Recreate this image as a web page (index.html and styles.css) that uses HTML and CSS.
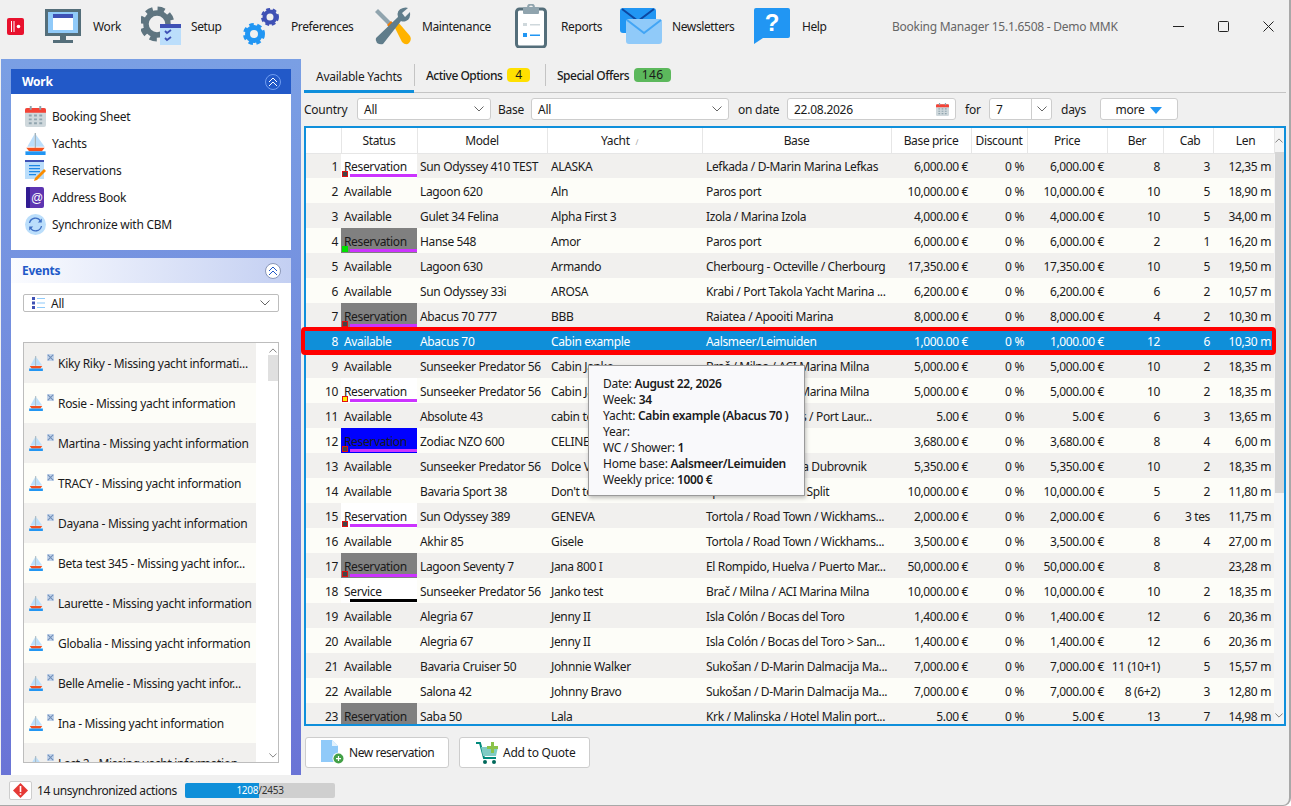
FILE: index.html
```html
<!DOCTYPE html>
<html lang="en">
<head>
  <meta charset="UTF-8">
  <title>Booking Manager</title>
  <link rel="stylesheet" href="styles.css">
</head>
<body>

  <!-- shared icons -->
  <svg class="icon-defs" width="0" height="0">
    <defs>
      <symbol id="boat" viewBox="0 0 22 24">
        <path d="M10 1v14H2z" fill="#bbdefb"/>
        <path d="M11.5 2v13H21z" fill="#bbdefb"/>
        <path d="M10.2 0h1v16h-1z" fill="#78909c"/>
        <path d="M1 16h20l-3 4H4z" fill="#f4511e"/>
        <path d="M0 20h22v4H0z" fill="#2196f3"/>
      </symbol>
      <symbol id="tiny" viewBox="0 0 8 8">
        <path d="M0 0h8v8H0z" fill="#c3d4ea"/>
        <path d="M1 1l6 6M7 1L1 7" stroke="#6f8db8" stroke-width="1.2"/>
      </symbol>
      <symbol id="chev" viewBox="0 0 10 6">
        <path d="M.5.5L5 5 9.500.5" fill="none" stroke="#666" stroke-width="1"/>
      </symbol>
      <symbol id="calendar" viewBox="0 0 22 22">
        <rect y="2" width="22" height="20" rx="2" fill="#cfd8dc"/>
        <path d="M0 4a2 2 0 0 1 2-2h18a2 2 0 0 1 2 2v3H0z" fill="#f44336"/>
        <path d="M5 0h2v4H5zM15 0h2v4h-2z" fill="#90a4ae"/>
        <path d="M4 9h3v2H4zM9.500 9h3v2h-3zM15 9h3v2h-3zM4 13h3v2H4zM9.500 13h3v2h-3zM15 13h3v2h-3zM4 17h3v2H4zM9.500 17h3v2h-3zM15 17h3v2h-3z" fill="#90a4ae"/>
      </symbol>
    </defs>
  </svg>

  <div class="app">

    <!-- Toolbar -->
    <header class="toolbar">
      <svg class="logo" width="17" height="17" viewBox="0 0 17 17">
        <rect width="17" height="17" rx="2" fill="#e8112d"/>
        <path d="M4.500 3v11M7 3v11" stroke="#fff" stroke-width="1"/>
        <circle cx="11.500" cy="8.500" r="1.800" fill="#fff"/>
      </svg>

      <div class="tool tool-work">
        <svg width="38" height="36" viewBox="0 0 38 36">
          <rect x="0" y="1" width="36" height="27" fill="#546e7a"/>
          <rect x="3" y="4" width="30" height="21" fill="#90caf9"/>
          <rect x="8" y="6" width="20" height="16" fill="#fff"/>
          <rect x="8" y="6" width="20" height="4" fill="#3f51b5"/>
          <path d="M15 28h6v4h-6zM8 32h20v3H8z" fill="#546e7a"/>
        </svg>
        <span>Work</span>
      </div>

      <div class="tool tool-setup">
        <svg width="40" height="40" viewBox="0 0 40 40">
          <circle cx="16" cy="18" r="15" fill="none" stroke="#5f7580" stroke-width="5" stroke-dasharray="7 4.800"/>
          <circle cx="16" cy="18" r="11" fill="none" stroke="#5f7580" stroke-width="5.500"/>
          <rect x="19" y="18" width="21" height="21" fill="#bbdefb"/>
          <rect x="19" y="18" width="21" height="4" fill="#3f51b5"/>
          <path d="M24 25l2 2 4-3M24 32l2 2 4-3" fill="none" stroke="#3f51b5" stroke-width="1.800"/>
        </svg>
        <span>Setup</span>
      </div>

      <div class="tool tool-pref">
        <svg width="39" height="38" viewBox="0 0 39 38">
          <circle cx="12" cy="27" r="6.500" fill="none" stroke="#2196f3" stroke-width="5"/>
          <circle cx="12" cy="27" r="9.500" fill="none" stroke="#2196f3" stroke-width="3" stroke-dasharray="4.500 3.450"/>
          <circle cx="28" cy="10" r="5.500" fill="none" stroke="#3f51b5" stroke-width="4"/>
          <circle cx="28" cy="10" r="8" fill="none" stroke="#3f51b5" stroke-width="2" stroke-dasharray="4 2.700"/>
        </svg>
        <span>Preferences</span>
      </div>

      <div class="tool tool-maint">
        <svg width="39" height="38" viewBox="0 0 39 38">
          <path d="M2 5l3-3 18 18-3 3z" fill="#90a4ae"/>
          <path d="M21 19l4-4 12 14q2 4-1 7t-7-1z" fill="#ffb300"/>
          <path d="M18 14l4 4-4 4-4-4z" fill="#f57c00"/>
          <path d="M3 31L25 10q-2-7 5-9 3-1 5 0l-6 5 3 4 5-5q1 7-4 9-3 1-5 0L10 37q-3 1-6-1-2-3-1-5z" fill="#607d8b"/>
        </svg>
        <span>Maintenance</span>
      </div>

      <div class="tool tool-reports">
        <svg width="36" height="44" viewBox="0 0 36 44">
          <rect x="1.500" y="5" width="29" height="38" rx="3" fill="#fff" stroke="#546e7a" stroke-width="3"/>
          <rect x="8" y="3" width="16" height="7" rx="1" fill="#90a4ae"/>
          <circle cx="16" cy="3.500" r="3" fill="none" stroke="#90a4ae" stroke-width="2"/>
          <path d="M8 19h4v3H8zM15 20h10v1.500H15z" fill="#cfd8dc"/>
          <path d="M8 29h4v4H8zM15 30.500h10V32H15z" fill="#2196f3"/>
        </svg>
        <span>Reports</span>
      </div>

      <div class="tool tool-news">
        <svg width="42" height="36" viewBox="0 0 42 36">
          <rect x="0" y="0" width="36" height="25" rx="3" fill="#2196f3"/>
          <path d="M2 1l16 12L34 1" fill="none" stroke="#0d47a1" stroke-width="2"/>
          <rect x="6" y="11" width="36" height="25" rx="3" fill="#90caf9"/>
          <path d="M7 12l17 13 17-13" fill="none" stroke="#42a5f5" stroke-width="2"/>
        </svg>
        <span>Newsletters</span>
      </div>

      <div class="tool tool-help">
        <svg width="38" height="36" viewBox="0 0 38 36">
          <path d="M2 0h32a2 2 0 0 1 2 2v26a2 2 0 0 1-2 2H9l-9 6V2a2 2 0 0 1 2-2z" fill="#2196f3"/>
          <text x="18" y="23" class="help-mark">?</text>
        </svg>
        <span>Help</span>
      </div>

      <div class="app-title">Booking Manager 15.1.6508 - Demo MMK</div>

      <div class="win-controls">
        <svg width="11" height="11" viewBox="0 0 11 11"><path d="M0 5.500h11" stroke="#222"/></svg>
        <svg width="11" height="11" viewBox="0 0 11 11"><rect x=".5" y=".5" width="10" height="10" rx="1" fill="none" stroke="#222"/></svg>
        <svg width="11" height="11" viewBox="0 0 11 11"><path d="M.5.5l10 10M10.500.5l-10 10" stroke="#222"/></svg>
      </div>
    </header>

    <div class="content">

      <!-- Left side panels -->
      <aside class="sidebar">
        <section class="panel panel-work">
          <div class="panel-head head-work">
            <span>Work</span>
            <span class="collapse collapse-dark">
              <svg width="10" height="10" viewBox="0 0 10 10"><path d="M1 5l4-4 4 4M1 9l4-4 4 4" fill="none" stroke="#fff"/></svg>
            </span>
          </div>
          <ul class="nav-list">
            <li><svg width="21" height="21"><use href="#calendar"/></svg>Booking Sheet</li>
            <li><svg width="21" height="22"><use href="#boat"/></svg>Yachts</li>
            <li>
              <svg width="21" height="21" viewBox="0 0 21 21">
                <rect width="19" height="19" fill="#bbdefb"/>
                <rect width="19" height="2" fill="#3f51b5"/>
                <path d="M4 5h11v1.200H4zM4 8h11v1.200H4zM4 11h11v1.200H4zM4 14h7v1.200H4z" fill="#1e88e5"/>
                <path d="M19 9l2 2-9 9-3 1 1-3z" fill="#fb8c00"/>
              </svg>Reservations
            </li>
            <li>
              <svg width="21" height="21" viewBox="0 0 21 21">
                <rect x="1" width="18" height="21" rx="2" fill="#5e35b1"/>
                <rect x="1" width="4" height="21" rx="1" fill="#311b92"/>
                <text x="12" y="15" class="at-mark">@</text>
              </svg>Address Book
            </li>
            <li>
              <svg width="21" height="21" viewBox="0 0 21 21">
                <circle cx="10.500" cy="10.500" r="10.500" fill="#bbdefb"/>
                <path d="M4.500 9a6 6 0 0 1 11-2M16.500 12a6 6 0 0 1-11 2" fill="none" stroke="#3f6fc4" stroke-width="1.300"/>
                <path d="M16.800 4.500v4h-4zM4.200 16.500v-4h4z" fill="#3f6fc4"/>
              </svg>Synchronize with CBM
            </li>
          </ul>
        </section>

        <section class="panel panel-events">
          <div class="panel-head head-events">
            <span>Events</span>
            <span class="collapse collapse-light">
              <svg width="10" height="10" viewBox="0 0 10 10"><path d="M1 5l4-4 4 4M1 9l4-4 4 4" fill="none" stroke="#2259c8"/></svg>
            </span>
          </div>
          <div class="events-body">
            <div class="event-filter">
              <svg width="13" height="12" viewBox="0 0 13 12">
                <path d="M0 0h3v3H0zM0 4.500h3v3H0zM0 9h3v3H0z" fill="#3f51b5"/>
                <path d="M5 1h8v1H5zM5 5.500h8v1H5zM5 10h8v1H5z" fill="#90caf9"/>
              </svg>
              <span>All</span>
              <svg class="chev" width="10" height="6"><use href="#chev"/></svg>
            </div>
            <div class="event-box">
              <ul class="event-list">
                <li><svg class="ev-boat" width="14" height="15"><use href="#boat"/></svg><svg class="ev-tiny" width="7" height="7"><use href="#tiny"/></svg><span>Kiky Riky - Missing yacht informati...</span></li>
                <li><svg class="ev-boat" width="14" height="15"><use href="#boat"/></svg><svg class="ev-tiny" width="7" height="7"><use href="#tiny"/></svg><span>Rosie - Missing yacht information</span></li>
                <li><svg class="ev-boat" width="14" height="15"><use href="#boat"/></svg><svg class="ev-tiny" width="7" height="7"><use href="#tiny"/></svg><span>Martina - Missing yacht information</span></li>
                <li><svg class="ev-boat" width="14" height="15"><use href="#boat"/></svg><svg class="ev-tiny" width="7" height="7"><use href="#tiny"/></svg><span>TRACY - Missing yacht information</span></li>
                <li><svg class="ev-boat" width="14" height="15"><use href="#boat"/></svg><svg class="ev-tiny" width="7" height="7"><use href="#tiny"/></svg><span>Dayana - Missing yacht information</span></li>
                <li><svg class="ev-boat" width="14" height="15"><use href="#boat"/></svg><svg class="ev-tiny" width="7" height="7"><use href="#tiny"/></svg><span>Beta test 345 - Missing yacht infor...</span></li>
                <li><svg class="ev-boat" width="14" height="15"><use href="#boat"/></svg><svg class="ev-tiny" width="7" height="7"><use href="#tiny"/></svg><span>Laurette - Missing yacht information</span></li>
                <li><svg class="ev-boat" width="14" height="15"><use href="#boat"/></svg><svg class="ev-tiny" width="7" height="7"><use href="#tiny"/></svg><span>Globalia - Missing yacht information</span></li>
                <li><svg class="ev-boat" width="14" height="15"><use href="#boat"/></svg><svg class="ev-tiny" width="7" height="7"><use href="#tiny"/></svg><span>Belle Amelie - Missing yacht infor...</span></li>
                <li><svg class="ev-boat" width="14" height="15"><use href="#boat"/></svg><svg class="ev-tiny" width="7" height="7"><use href="#tiny"/></svg><span>Ina - Missing yacht information</span></li>
                <li><svg class="ev-boat" width="14" height="15"><use href="#boat"/></svg><svg class="ev-tiny" width="7" height="7"><use href="#tiny"/></svg><span>Last 2 - Missing yacht information</span></li>
              </ul>
              <div class="event-scroll">
                <svg class="arrow-up" width="8" height="5"><use href="#chev"/></svg>
                <div class="event-thumb"></div>
                <svg class="arrow-down" width="8" height="5"><use href="#chev"/></svg>
              </div>
            </div>
          </div>
        </section>
      </aside>

      <!-- Main area -->
      <main class="main">
        <nav class="tabs">
          <div class="tab tab-active">Available Yachts</div>
          <div class="tab tab-options">Active Options <span class="badge badge-yellow">4</span></div>
          <div class="tab tab-offers">Special Offers <span class="badge badge-green">146</span></div>
        </nav>

        <div class="filters">
          <label class="lbl-country">Country</label>
          <div class="combo combo-country"><span>All</span><svg width="10" height="6"><use href="#chev"/></svg></div>
          <label class="lbl-base">Base</label>
          <div class="combo combo-base"><span>All</span><svg width="10" height="6"><use href="#chev"/></svg></div>
          <label class="lbl-date">on date</label>
          <div class="combo combo-date"><span>22.08.2026</span><svg width="13" height="13"><use href="#calendar"/></svg></div>
          <label class="lbl-for">for</label>
          <div class="combo combo-days"><span>7</span><div class="combo-drop"><svg width="10" height="6"><use href="#chev"/></svg></div></div>
          <label class="lbl-days">days</label>
          <button class="more-btn">more <svg width="12" height="7" viewBox="0 0 12 7"><path d="M0 0h12L6 7z" fill="#2196f3"/></svg></button>
        </div>

        <div class="grid-box">
          <div class="grid-scroll">
            <table class="grid">
              <colgroup>
                <col class="c-num"><col class="c-status"><col class="c-model"><col class="c-yacht"><col class="c-base">
                <col class="c-bprice"><col class="c-disc"><col class="c-price"><col class="c-ber"><col class="c-cab"><col class="c-len">
              </colgroup>
              <thead>
                <tr>
                  <th></th><th>Status</th><th>Model</th>
                  <th class="th-yacht">Yacht <span class="sort-mark">∕</span></th>
                  <th>Base</th><th>Base price</th><th>Discount</th><th>Price</th><th class="th-shift">Ber</th><th class="th-shift">Cab</th><th class="th-shift">Len</th>
                </tr>
              </thead>
              <tbody>
                <tr><td class="r">1</td><td class="st st-white">Reservation<i class="line"></i><i class="mark"></i></td><td>Sun Odyssey 410 TEST</td><td>ALASKA</td><td>Lefkada / D-Marin Marina Lefkas</td><td class="r">6,000.00 €</td><td class="r">0 %</td><td class="r">6,000.00 €</td><td class="r">8</td><td class="r">3</td><td class="r">12,35 m</td></tr>
                <tr><td class="r">2</td><td class="st">Available</td><td>Lagoon 620</td><td>Aln</td><td>Paros port</td><td class="r">10,000.00 €</td><td class="r">0 %</td><td class="r">10,000.00 €</td><td class="r">10</td><td class="r">5</td><td class="r">18,90 m</td></tr>
                <tr><td class="r">3</td><td class="st">Available</td><td>Gulet 34 Felina</td><td>Alpha First 3</td><td>Izola / Marina Izola</td><td class="r">4,000.00 €</td><td class="r">0 %</td><td class="r">4,000.00 €</td><td class="r">10</td><td class="r">5</td><td class="r">34,00 m</td></tr>
                <tr><td class="r">4</td><td class="st st-gray">Reservation<i class="line"></i><i class="mark mark-green"></i></td><td>Hanse 548</td><td>Amor</td><td>Paros port</td><td class="r">6,000.00 €</td><td class="r">0 %</td><td class="r">6,000.00 €</td><td class="r">2</td><td class="r">1</td><td class="r">16,20 m</td></tr>
                <tr><td class="r">5</td><td class="st">Available</td><td>Lagoon 630</td><td>Armando</td><td>Cherbourg - Octeville / Cherbourg</td><td class="r">17,350.00 €</td><td class="r">0 %</td><td class="r">17,350.00 €</td><td class="r">10</td><td class="r">5</td><td class="r">19,50 m</td></tr>
                <tr><td class="r">6</td><td class="st">Available</td><td>Sun Odyssey 33i</td><td>AROSA</td><td>Krabi / Port Takola Yacht Marina ...</td><td class="r">6,200.00 €</td><td class="r">0 %</td><td class="r">6,200.00 €</td><td class="r">6</td><td class="r">2</td><td class="r">10,57 m</td></tr>
                <tr><td class="r">7</td><td class="st st-gray">Reservation<i class="line"></i><i class="mark"></i></td><td>Abacus 70 777</td><td>BBB</td><td>Raiatea / Apooiti Marina</td><td class="r">8,000.00 €</td><td class="r">0 %</td><td class="r">8,000.00 €</td><td class="r">4</td><td class="r">2</td><td class="r">10,30 m</td></tr>
                <tr class="selected"><td class="r">8</td><td class="st">Available</td><td>Abacus 70</td><td>Cabin example</td><td>Aalsmeer/Leimuiden</td><td class="r">1,000.00 €</td><td class="r">0 %</td><td class="r">1,000.00 €</td><td class="r">12</td><td class="r">6</td><td class="r">10,30 m</td></tr>
                <tr><td class="r">9</td><td class="st">Available</td><td>Sunseeker Predator 56</td><td>Cabin Janko</td><td>Brač / Milna / ACI Marina Milna</td><td class="r">5,000.00 €</td><td class="r">0 %</td><td class="r">5,000.00 €</td><td class="r">10</td><td class="r">2</td><td class="r">18,35 m</td></tr>
                <tr><td class="r">10</td><td class="st st-white">Reservation<i class="line"></i><i class="mark mark-yellow"></i></td><td>Sunseeker Predator 56</td><td>Cabin Janko</td><td>Brač / Milna / ACI Marina Milna</td><td class="r">5,000.00 €</td><td class="r">0 %</td><td class="r">5,000.00 €</td><td class="r">10</td><td class="r">2</td><td class="r">18,35 m</td></tr>
                <tr><td class="r">11</td><td class="st">Available</td><td>Absolute 43</td><td>cabin test</td><td>Cote d'Azur / Palais / Port Laur...</td><td class="r">5.00 €</td><td class="r">0 %</td><td class="r">5.00 €</td><td class="r">6</td><td class="r">3</td><td class="r">13,65 m</td></tr>
                <tr><td class="r">12</td><td class="st st-blue">Reservation<i class="line"></i><i class="mark"></i></td><td>Zodiac NZO 600</td><td>CELINE</td><td>Paros port</td><td class="r">3,680.00 €</td><td class="r">0 %</td><td class="r">3,680.00 €</td><td class="r">8</td><td class="r">4</td><td class="r">6,00 m</td></tr>
                <tr><td class="r">13</td><td class="st">Available</td><td>Sunseeker Predator 56</td><td>Dolce Vita</td><td>Dubrovnik / Marina Dubrovnik</td><td class="r">5,350.00 €</td><td class="r">0 %</td><td class="r">5,350.00 €</td><td class="r">10</td><td class="r">2</td><td class="r">18,35 m</td></tr>
                <tr><td class="r">14</td><td class="st">Available</td><td>Bavaria Sport 38</td><td>Don't touch</td><td>Split / ACI Marina / Split</td><td class="r">10,000.00 €</td><td class="r">0 %</td><td class="r">10,000.00 €</td><td class="r">5</td><td class="r">2</td><td class="r">11,80 m</td></tr>
                <tr><td class="r">15</td><td class="st st-white">Reservation<i class="line"></i><i class="mark"></i></td><td>Sun Odyssey 389</td><td>GENEVA</td><td>Tortola / Road Town / Wickhams...</td><td class="r">2,000.00 €</td><td class="r">0 %</td><td class="r">2,000.00 €</td><td class="r">6</td><td class="r">3 tes</td><td class="r">11,75 m</td></tr>
                <tr><td class="r">16</td><td class="st">Available</td><td>Akhir 85</td><td>Gisele</td><td>Tortola / Road Town / Wickhams...</td><td class="r">3,500.00 €</td><td class="r">0 %</td><td class="r">3,500.00 €</td><td class="r">8</td><td class="r">4</td><td class="r">27,00 m</td></tr>
                <tr><td class="r">17</td><td class="st st-gray">Reservation<i class="line"></i><i class="mark"></i></td><td>Lagoon Seventy 7</td><td>Jana 800 I</td><td>El Rompido, Huelva / Puerto Mar...</td><td class="r">50,000.00 €</td><td class="r">0 %</td><td class="r">50,000.00 €</td><td class="r">8</td><td class="r"></td><td class="r">23,28 m</td></tr>
                <tr><td class="r">18</td><td class="st st-white">Service<i class="line line-black"></i></td><td>Sunseeker Predator 56</td><td>Janko test</td><td>Brač / Milna / ACI Marina Milna</td><td class="r">10,000.00 €</td><td class="r">0 %</td><td class="r">10,000.00 €</td><td class="r">10</td><td class="r">2</td><td class="r">18,35 m</td></tr>
                <tr><td class="r">19</td><td class="st">Available</td><td>Alegria 67</td><td>Jenny II</td><td>Isla Colón / Bocas del Toro</td><td class="r">1,400.00 €</td><td class="r">0 %</td><td class="r">1,400.00 €</td><td class="r">12</td><td class="r">6</td><td class="r">20,36 m</td></tr>
                <tr><td class="r">20</td><td class="st">Available</td><td>Alegria 67</td><td>Jenny II</td><td>Isla Colón / Bocas del Toro &gt; San...</td><td class="r">1,400.00 €</td><td class="r">0 %</td><td class="r">1,400.00 €</td><td class="r">12</td><td class="r">6</td><td class="r">20,36 m</td></tr>
                <tr><td class="r">21</td><td class="st">Available</td><td>Bavaria Cruiser 50</td><td>Johnnie Walker</td><td>Sukošan / D-Marin Dalmacija Ma...</td><td class="r">7,000.00 €</td><td class="r">0 %</td><td class="r">7,000.00 €</td><td class="r">11 (10+1)</td><td class="r">5</td><td class="r">15,57 m</td></tr>
                <tr><td class="r">22</td><td class="st">Available</td><td>Salona 42</td><td>Johnny Bravo</td><td>Sukošan / D-Marin Dalmacija Ma...</td><td class="r">7,000.00 €</td><td class="r">0 %</td><td class="r">7,000.00 €</td><td class="r">8 (6+2)</td><td class="r">3</td><td class="r">12,80 m</td></tr>
                <tr><td class="r">23</td><td class="st st-gray">Reservation<i class="mark mark-low"></i></td><td>Saba 50</td><td>Lala</td><td>Krk / Malinska / Hotel Malin port...</td><td class="r">5.00 €</td><td class="r">0 %</td><td class="r">5.00 €</td><td class="r">13</td><td class="r">7</td><td class="r">14,98 m</td></tr>
              </tbody>
            </table>
            <div class="grid-scrollbar">
              <svg class="arrow-up" width="8" height="5"><use href="#chev"/></svg>
              <div class="grid-thumb"></div>
              <svg class="arrow-down" width="8" height="5"><use href="#chev"/></svg>
            </div>
          </div>

          <div class="row-highlight"></div>

          <div class="yacht-tip">
            <div>Date: <b>August 22, 2026</b></div>
            <div>Week: <b>34</b></div>
            <div>Yacht: <b>Cabin example (Abacus 70 )</b></div>
            <div>Year:</div>
            <div>WC / Shower: <b>1</b></div>
            <div>Home base: <b>Aalsmeer/Leimuiden</b></div>
            <div>Weekly price: <b>1000 €</b></div>
          </div>
        </div>

        <div class="actions">
          <button class="act-btn btn-new">
            <svg width="24" height="25" viewBox="0 0 24 25">
              <path d="M0 0h11l6 6v16H0z" fill="#90caf9"/>
              <path d="M11 0l6 6h-6z" fill="#e3f2fd"/>
              <circle cx="17.500" cy="18.500" r="6" fill="#fff"/>
              <circle cx="17.500" cy="18.500" r="5" fill="#43a047"/>
              <path d="M15 18h5v1.200h-5zM16.900 16h1.200v5h-1.200z" fill="#fff"/>
            </svg>
            New reservation
          </button>
          <button class="act-btn btn-quote">
            <svg width="23" height="24" viewBox="0 0 23 24">
              <path d="M0 2h4l4 15h12" fill="none" stroke="#00897b" stroke-width="2"/>
              <path d="M5 6h17l-2 9H7z" fill="#80cbc4"/>
              <circle cx="9" cy="21" r="2" fill="#00695c"/>
              <circle cx="18" cy="21" r="2" fill="#00695c"/>
              <path d="M11 5h4V1h3v4h4v3h-4v4h-3V8h-4z" fill="#8bc34a"/>
            </svg>
            Add to Quote
          </button>
        </div>
      </main>
    </div>

    <!-- Status bar -->
    <footer class="statusbar">
      <div class="alert-btn">
        <svg width="15" height="15" viewBox="0 0 15 15">
          <path d="M7.500 0L15 7.500 7.500 15 0 7.500z" fill="#e53935"/>
          <path d="M6.700 3h1.600v6H6.700zM6.700 10.200h1.600v1.600H6.700z" fill="#fff"/>
        </svg>
      </div>
      <span class="status-text">14 unsynchronized actions</span>
      <div class="progress">
        <div class="progress-fill"></div>
        <div class="progress-label"><span class="p-done">1208</span>/2453</div>
      </div>
    </footer>
  </div>

</body>
</html>
```

FILE: styles.css
```css
* {
  box-sizing: border-box;
  margin: 0;
  padding: 0;
}

body {
  font-family: "Noto Sans", "Open Sans", sans-serif;
  font-size: 12px;
  letter-spacing: -0.25px;
  color: #1a1a1a;
  background: #fff;
  overflow: hidden;
}

.icon-defs {
  position: absolute;
}

ul {
  list-style: none;
}

.app {
  width: 1291px;
  height: 806px;
  display: flex;
  flex-direction: column;
  background: #f0f0f0;
  border-right: 2px solid #a8a8a8;
  border-bottom: 1px solid #a8a8a8;
  border-bottom-right-radius: 8px;
  overflow: hidden;
}

/* Toolbar */
.toolbar {
  height: 59px;
  flex: none;
  display: flex;
  align-items: center;
  padding-left: 7px;
  padding-bottom: 7px;
}

.logo {
  margin-right: 21px;
}

.tool {
  display: flex;
  align-items: center;
  gap: 10px;
  height: 48px;
}

.tool span {
  white-space: nowrap;
  letter-spacing: -0.4px;
}

.tool-work { width: 96px; }
.tool-setup { width: 101px; }
.tool-pref { width: 131px; }
.tool-maint { width: 142px; }
.tool-reports { width: 105px; }
.tool-news { width: 134px; }
.tool-help { width: 138px; }

.help-mark {
  font-family: "Liberation Sans", sans-serif;
  font-size: 24px;
  font-weight: 700;
  fill: #fff;
  text-anchor: middle;
}

.at-mark {
  font-family: "Liberation Sans", sans-serif;
  font-size: 12px;
  fill: #fff;
  text-anchor: middle;
}

.app-title {
  width: 240px;
  color: #666;
  white-space: nowrap;
}

.win-controls {
  display: flex;
  gap: 34px;
  margin-left: 41px;
}

/* Sidebar */
.content {
  flex: 1;
  display: flex;
  min-height: 0;
}

.sidebar {
  width: 300px;
  margin-left: 1px;
  padding: 10px 10px 0;
  background: linear-gradient(to bottom, #7a9fe4, #6a74d6);
  display: flex;
  flex-direction: column;
  gap: 8px;
}

.panel {
  background: #fff;
}

.panel-work {
  height: 181px;
}

.panel-events {
  flex: 1;
  min-height: 0;
}

.panel-head {
  height: 25px;
  display: flex;
  align-items: center;
  justify-content: space-between;
  padding: 0 10px 0 11px;
  font-weight: 700;
}

.head-work {
  background: #2259c8;
  color: #fff;
}

.head-events {
  background: linear-gradient(to right, #fbfcff, #c3cff2);
  color: #2259c8;
}

.collapse {
  width: 16px;
  height: 16px;
  border-radius: 50%;
  display: flex;
  align-items: center;
  justify-content: center;
}

.collapse-dark {
  border: 1px solid #6f9cf0;
}

.collapse-light {
  background: #fff;
  border: 1px solid #8a97b8;
}

.nav-list {
  padding-top: 9px;
  padding-left: 14px;
}

.nav-list li {
  height: 27px;
  display: flex;
  align-items: center;
  gap: 6px;
}

.events-body {
  padding: 11px 12px 0;
}

.event-filter {
  height: 18px;
  display: flex;
  align-items: center;
  gap: 6px;
  padding: 0 8px;
  border: 1px solid #bdbdbd;
  border-radius: 2px;
}

.event-filter .chev {
  margin-left: auto;
}

.event-box {
  margin-top: 30px;
  height: 421px;
  border: 1px solid #bdbdbd;
  display: flex;
  overflow: hidden;
}

.event-list {
  width: 232px;
  flex: none;
  letter-spacing: -0.3px;
}

.event-list li {
  height: 40px;
  display: flex;
  align-items: center;
  padding-left: 5px;
  white-space: nowrap;
}

.event-list li:nth-child(odd) {
  background: #f1f0ee;
}

.event-list li:nth-child(even) {
  background: #fdfdf8;
}

.ev-tiny {
  margin: -12px 4px 0 4px;
}

.event-scroll {
  flex: 1;
  padding-left: 12px;
  display: flex;
  flex-direction: column;
  align-items: stretch;
}

.event-scroll .arrow-up {
  margin: 5px 0 0 1px;
  transform: rotate(180deg);
  flex: none;
}

.event-thumb {
  width: 10px;
  height: 26px;
  margin-top: 2px;
  background: #e0e0e0;
}

.event-scroll .arrow-down {
  margin: auto 0 4px 1px;
  flex: none;
}

/* Main area */
.main {
  flex: 1;
  min-width: 0;
  padding: 1px 3px 0 3px;
  display: flex;
  flex-direction: column;
}

.tabs {
  height: 33px;
  display: flex;
  align-items: center;
  border-bottom: 1px solid #c4c4c4;
}

.tab {
  height: 32px;
  display: flex;
  align-items: center;
  white-space: nowrap;
  position: relative;
}

.tab-active {
  width: 110px;
  padding-left: 12px;
  padding-top: 2px;
  border-bottom: 3px solid #0f8fdb;
  height: 33px;
  margin-bottom: -1px;
}

.tab-options,
.tab-offers {
  padding-left: 12px;
  padding-bottom: 2px;
  gap: 5px;
  font-weight: 500;
  letter-spacing: -0.5px;
}

.tab-options {
  width: 131px;
}

.tab-options::before,
.tab-offers::before {
  content: "";
  position: absolute;
  left: 0;
  top: 4px;
  height: 22px;
  border-left: 1px solid #c4c4c4;
}

.badge {
  height: 14px;
  line-height: 14px;
  border-radius: 4px;
  text-align: center;
  font-weight: 400;
  font-size: 12px;
  letter-spacing: 0.4px;
}

.badge-yellow {
  width: 23px;
  background: #ffe000;
}

.badge-green {
  width: 37px;
  background: #5cb85c;
}

.filters {
  height: 22px;
  margin-top: 5px;
  display: flex;
  align-items: center;
}

.lbl-country { width: 53px; }
.lbl-base { width: 33px; }
.lbl-date { width: 49px; }
.lbl-for { width: 24px; }
.lbl-days { width: 39px; }

.combo {
  height: 22px;
  display: flex;
  align-items: center;
  justify-content: space-between;
  background: #fff;
  border: 1px solid #cdcdcd;
  border-radius: 3px;
  padding: 0 6px 0 6px;
}

.combo-country {
  width: 134px;
  margin-right: 7px;
}

.combo-base {
  width: 198px;
  margin-right: 9px;
}

.combo-date {
  width: 169px;
  margin-right: 9px;
}

.combo-days {
  width: 63px;
  margin-right: 9px;
  padding-right: 0;
}

.combo-drop {
  width: 20px;
  height: 100%;
  border-left: 1px solid #cdcdcd;
  display: flex;
  align-items: center;
  justify-content: center;
}

.more-btn {
  width: 78px;
  height: 22px;
  font: inherit;
  letter-spacing: inherit;
  color: inherit;
  background: #fff;
  border: 1px solid #cdcdcd;
  border-radius: 3px;
}

.more-btn svg {
  margin-left: 3px;
}

/* Yacht grid */
.grid-box {
  position: relative;
  width: 982px;
  height: 600px;
  margin-top: 6px;
  border: 2px solid #0f8fdb;
  background: #f4f4f4;
}

.grid-scroll {
  height: 100%;
  display: flex;
  overflow: hidden;
}

.grid {
  width: 968px;
  flex: none;
  align-self: flex-start;
  table-layout: fixed;
  border-collapse: collapse;
  letter-spacing: -0.35px;
}

.c-num { width: 35px; }
.c-status { width: 76px; }
.c-model { width: 130px; }
.c-yacht { width: 155px; }
.c-base { width: 189px; }
.c-bprice { width: 80px; }
.c-disc { width: 56px; }
.c-price { width: 80px; }
.c-ber { width: 56px; }
.c-cab { width: 50px; }
.c-len { width: 61px; }

.grid th {
  height: 25px;
  font-weight: 400;
  background: #fff;
  border-right: 1px solid #e6e6e6;
  border-bottom: 1px solid #e6e6e6;
}

.grid th.th-yacht {
  padding-right: 10px;
}

.grid th.th-shift {
  padding-left: 4px;
}

.sort-mark {
  font-size: 8px;
  color: #999;
  margin-left: 3px;
}

.grid td {
  height: 25px;
  padding: 1px 3px 0;
  white-space: nowrap;
  overflow: hidden;
}

.grid td:nth-child(4),
.grid td:nth-child(5) {
  padding-left: 4px;
}

.grid tbody tr:nth-child(odd) {
  background: #f1f0ee;
}

.grid tbody tr:nth-child(even) {
  background: #fdfdf8;
}

.grid tbody tr.selected {
  background: #0f8fd9;
  color: #fff;
}

.grid td.r {
  text-align: right;
}

.grid td.st {
  position: relative;
}

.st-white { background: #fff; }
.st-gray { background: #808080; }
.st-blue { background: #0000ff; }

.line {
  position: absolute;
  left: 9px;
  right: 0;
  bottom: 1px;
  height: 3px;
  background: #cc33ff;
}

.line-black {
  background: #000;
}

.mark {
  position: absolute;
  left: 1px;
  bottom: 1px;
  width: 6px;
  height: 6px;
  background: #444;
  border: 1px solid #e01010;
}

.mark-green {
  background: #00e000;
  border-color: #00e000;
}

.mark-yellow {
  background: #ffee00;
}

.mark-low {
  bottom: 0;
  height: 4px;
  border-bottom: 0;
}

.grid-scrollbar {
  flex: 1;
  display: flex;
  flex-direction: column;
  align-items: center;
}

.grid-scrollbar .arrow-up {
  margin-top: 10px;
  transform: rotate(180deg);
  flex: none;
}

.grid-thumb {
  width: 100%;
  height: 341px;
  margin-top: 9px;
  background: #d6d6d6;
}

.grid-scrollbar .arrow-down {
  margin-top: auto;
  margin-bottom: 6px;
  flex: none;
}

.row-highlight {
  position: absolute;
  left: -5px;
  top: 199px;
  width: 975px;
  height: 28px;
  border: 4px solid #f00;
  border-bottom-width: 5px;
  border-radius: 4px;
}

.yacht-tip {
  position: absolute;
  left: 282px;
  top: 237px;
  width: 217px;
  height: 131px;
  padding: 10px 14px;
  line-height: 16px;
  background: #f9f9fb;
  border: 1px solid #9a9a9a;
  box-shadow: 1px 2px 4px rgba(0, 0, 0, 0.25);
  white-space: nowrap;
}

.yacht-tip b {
  font-weight: 600;
  letter-spacing: -0.35px;
}

.actions {
  margin-top: 11px;
  display: flex;
  gap: 10px;
  padding-left: 1px;
}

.act-btn {
  height: 31px;
  display: flex;
  align-items: center;
  font: inherit;
  letter-spacing: inherit;
  color: inherit;
  background: #fff;
  border: 1px solid #cdcdcd;
  border-radius: 3px;
}

.btn-new {
  width: 144px;
  padding-left: 15px;
  gap: 4px;
  letter-spacing: -0.45px;
}

.btn-quote {
  width: 131px;
  padding-left: 16px;
  gap: 4px;
}

/* Status bar */
.statusbar {
  height: 30px;
  flex: none;
  display: flex;
  align-items: center;
  padding-left: 9px;
}

.alert-btn {
  width: 23px;
  height: 19px;
  display: flex;
  align-items: center;
  justify-content: center;
  background: #fff;
  border: 1px solid #cdcdcd;
  border-radius: 2px;
}

.status-text {
  width: 148px;
  margin-left: 5px;
  letter-spacing: -0.4px;
}

.progress {
  position: relative;
  width: 150px;
  height: 15px;
  background: #cfcfcf;
  border-radius: 2px;
}

.progress-fill {
  height: 100%;
  width: 74px;
  background: #0f8fd9;
  border-radius: 2px 0 0 2px;
}

.progress-label {
  position: absolute;
  inset: 0;
  text-align: center;
  font-size: 10px;
  line-height: 15px;
  color: #333;
}

.p-done {
  color: #fff;
}
```
